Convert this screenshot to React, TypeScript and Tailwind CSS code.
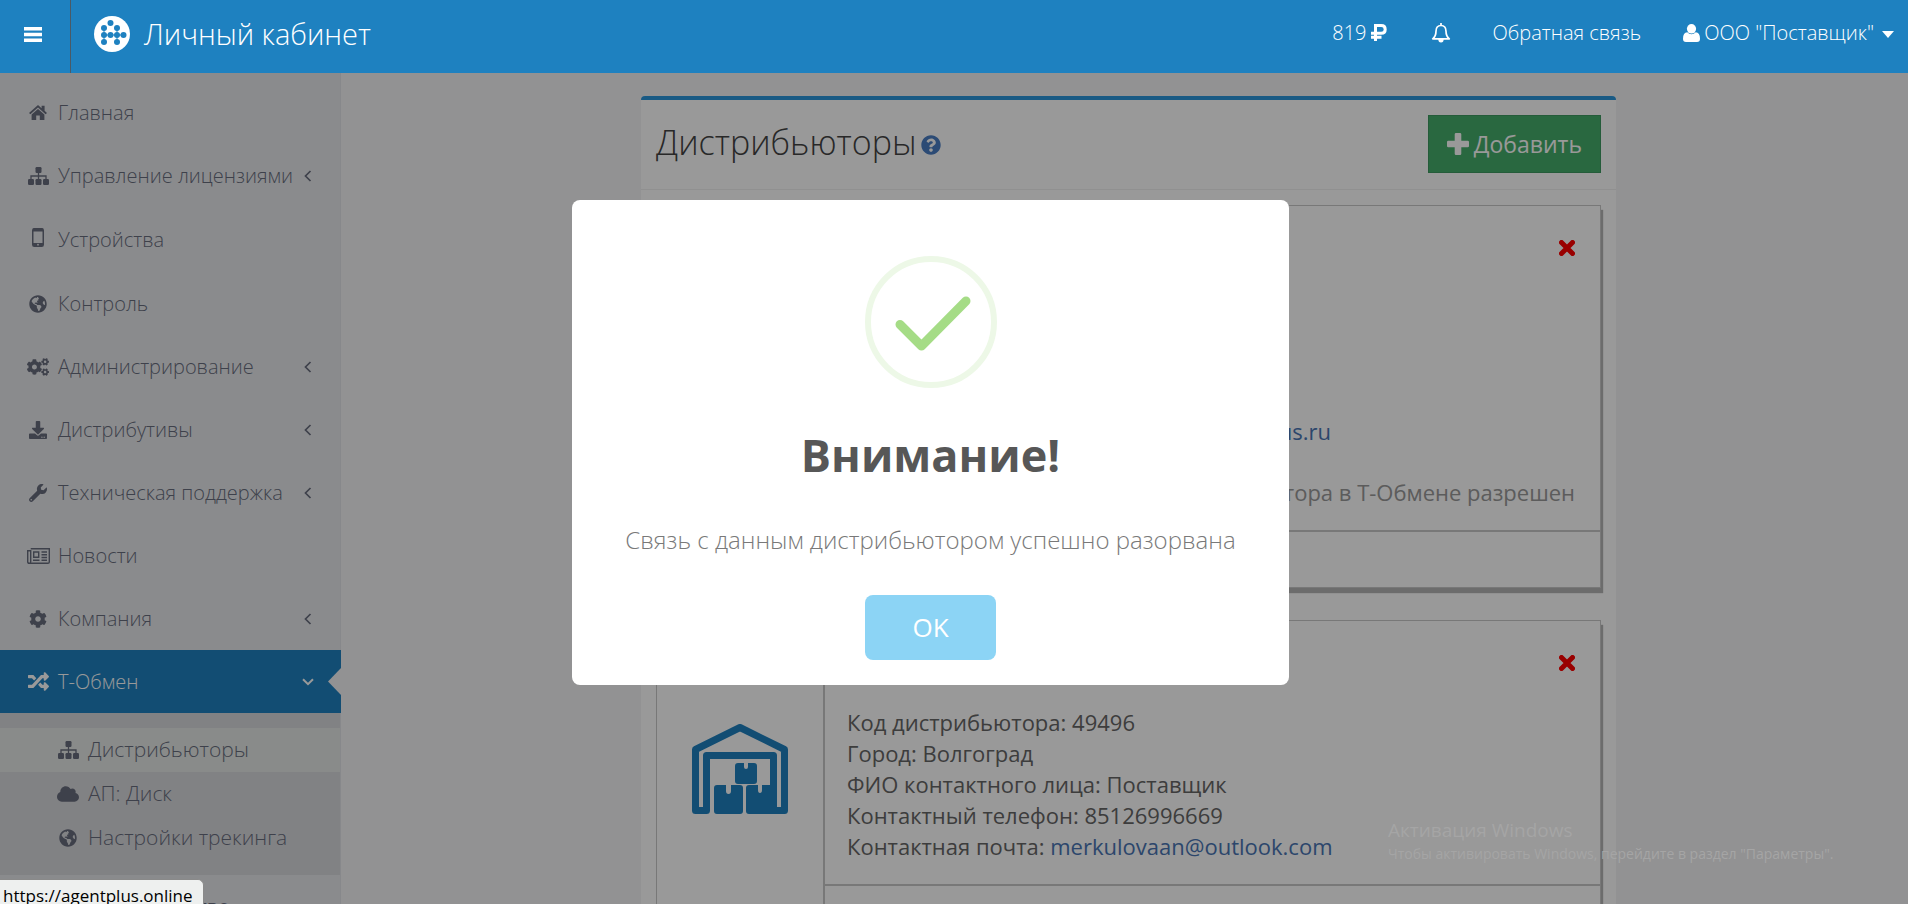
import React from "react";
import {
  FaCloud,
  FaCog,
  FaCogs,
  FaDownload,
  FaGlobeAmericas,
  FaQuestionCircle,
  FaRandom,
  FaWrench,
} from "react-icons/fa";

const HomeIcon = () => (
  <svg viewBox="0 0 18 15" className="w-[18px] h-[15px]" fill="currentColor">
    <path d="M9 0 0 8l1.4 1.2L9 2.4l7.600 6.800L18 8l-2.400-2.200V.8h-3v2.400z" />
    <path d="M9 4 2.600 9.600V15h4.600v-4.600h3.600V15h4.600V9.600z" />
  </svg>
);

const SitemapIcon = () => (
  <svg viewBox="0 0 21 18" className="w-[21px] h-[18px]" fill="currentColor">
    <rect x="7.500" y="0" width="6" height="6" rx="1.200" />
    <rect x="0" y="12" width="6" height="6" rx="1.200" />
    <rect x="7.500" y="12" width="6" height="6" rx="1.200" />
    <rect x="15" y="12" width="6" height="6" rx="1.200" />
    <path d="M3 12V9h15v3M10.500 5v8" fill="none" stroke="currentColor" strokeWidth="1.300" />
  </svg>
);

const MobileIcon = () => (
  <svg viewBox="0 0 12 19" className="w-[12px] h-[19px] -mt-1" fill="none">
    <rect x=".75" y=".75" width="10.500" height="17.500" rx="1.500" stroke="currentColor" strokeWidth="1.500" />
    <path d="M1 2h10M1 16.500h10" stroke="currentColor" strokeWidth="2.800" />
    <circle cx="6" cy="16.700" r=".9" fill="#e7e8ec" />
  </svg>
);

const NewsIcon = () => (
  <svg viewBox="0 0 23 16" className="w-[23px] h-4" fill="none" stroke="currentColor" strokeWidth="1.400">
    <path d="M3.700.7h18.600v13.200q0 1.400-1.400 1.400H2.200q-1.500 0-1.500-1.500V2.700h3v11q0 1.600-1.500 1.600" />
    <path d="M6.700 4h5v5.300h-5zM6 12.300h6.500M14.500 4h5.500M14.500 6.800h5.500M14.500 9.500h5.500M14.500 12.300h5.500" />
  </svg>
);

const BellIcon = () => (
  <svg viewBox="0 0 20 20" className="w-5 h-5" fill="none" stroke="currentColor" strokeWidth="1.700">
    <path d="M10 2.500C6.500 2.500 5 5 5 8.200c0 3.800-1 5.800-3.300 7.600h16.600C16 14 15 12 15 8.200c0-3.200-1.500-5.700-5-5.700z" strokeLinejoin="round" />
    <path d="M10 0v2.500" />
    <path d="M7.300 16a2.700 3.500 0 0 0 5.400 0z" fill="currentColor" stroke="none" />
  </svg>
);

const RubleIcon = () => (
  <svg viewBox="0 0 16 17" className="w-4 h-[17px]" fill="none" stroke="currentColor" strokeWidth="3">
    <path d="M4.500 17V1.500h5.700q4 0 4 3.900t-4 3.900H0M0 13.300h10.500" />
  </svg>
);

const UserIcon = () => (
  <svg viewBox="0 0 17 18" className="w-[17px] h-[18px]" fill="currentColor">
    <ellipse cx="8.500" cy="4.800" rx="4.600" ry="4.800" />
    <path d="M4.300 8.300Q6 10.300 8.500 10.300t4.200-2q4.300.4 4.300 6.500 0 3.200-3 3.200H3q-3 0-3-3.200 0-6.100 4.300-6.500z" />
  </svg>
);

const PlusIcon = () => (
  <svg viewBox="0 0 22 22" className="w-[22px] h-[22px]" fill="currentColor">
    <path d="M9 0h4q1.300 0 1.300 1.300v6.400h6.400Q22 7.700 22 9v4q0 1.300-1.300 1.300h-6.400v6.400Q14.300 22 13 22H9q-1.300 0-1.300-1.300v-6.400H1.300Q0 14.300 0 13V9q0-1.300 1.300-1.300h6.400V1.300Q7.700 0 9 0z" />
  </svg>
);

const TimesIcon = () => (
  <svg viewBox="0 0 16 16" className="w-4 h-4" fill="none" stroke="currentColor" strokeWidth="5">
    <path d="M2.500 2.500l11 11M13.500 2.500l-11 11" strokeLinecap="round" />
  </svg>
);

const AngleIcon = ({ open }: { open?: boolean }) =>
  open ? (
    <svg viewBox="0 0 12 8" className="w-3 h-2" fill="none" stroke="currentColor" strokeWidth="2">
      <path d="M1 1.200 6 6.200l5-5" />
    </svg>
  ) : (
    <svg viewBox="0 0 8 12" className="w-2 h-3 mr-[2px]" fill="none" stroke="currentColor" strokeWidth="1.700">
      <path d="M6.500 1 1.500 6l5 5" />
    </svg>
  );

const Logo = () => (
  <svg viewBox="0 0 36 36" className="w-9 h-9">
    <circle cx="18" cy="18" r="18" fill="#fff" />
    <path d="M10 12v14M23 12v14M10 19h20" stroke="#1e81c0" strokeWidth="1" />
    {[[16.5, 7], [10, 12], [23, 12], [10, 19], [16.5, 19], [23, 19], [29.5, 19], [10, 26], [23, 26]].map(([x, y]) => (
      <circle key={`${x}-${y}`} cx={x} cy={y} r="3" fill="#1e81c0" />
    ))}
  </svg>
);

const WarehouseIcon = () => (
  <svg viewBox="0 0 96 90" className="w-24 h-[90px]" fill="#1e81c0">
    <path d="M48 3.500 3.500 25.500V86.500H14.500V31.500H81.500V86.500H92.500V25.500z" fill="none" stroke="#1e81c0" strokeWidth="7" strokeLinejoin="round" />
    <path d="M78 61h16v26q0 3-3 3H57q-3 0-3-3V64q0-3 3-3h9v5q0 3 2 3t2-3v-5z" />
    <path d="M85 32h4v51h-4z" fill="#fff" />
    <path d="M25 61h9v6q0 3 2.500 3t2.500-3v-6h9q3 0 3 3v23q0 3-3 3H25q-3 0-3-3V64q0-3 3-3z" />
    <path d="M46 39h6v4q0 2 2 2t2-2v-4h6q3 0 3 3v15q0 3-3 3H46q-3 0-3-3V42q0-3 3-3z" />
  </svg>
);

interface MenuItem {
  title: string;
  icon: React.ReactNode;
  arrow?: boolean;
  tall?: boolean;
}

const menu: MenuItem[] = [
  { title: "Главная", icon: <HomeIcon /> },
  { title: "Управление лицензиями", icon: <SitemapIcon />, arrow: true },
  { title: "Устройства", icon: <MobileIcon />, tall: true },
  { title: "Контроль", icon: <FaGlobeAmericas size={18} /> },
  { title: "Администрирование", icon: <FaCogs size={22} />, arrow: true },
  { title: "Дистрибутивы", icon: <FaDownload size={18} />, arrow: true },
  { title: "Техническая поддержка", icon: <FaWrench size={18} />, arrow: true },
  { title: "Новости", icon: <NewsIcon /> },
  { title: "Компания", icon: <FaCog size={18} />, arrow: true },
];

const subMenu = [
  { title: "Дистрибьюторы", icon: <SitemapIcon />, active: true },
  { title: "АП: Диск", icon: <FaCloud size={22} />, active: false },
  { title: "Настройки трекинга", icon: <FaGlobeAmericas size={18} />, active: false },
];

const Header = () => (
  <header className="relative z-20 h-[73px] shrink-0 bg-[#1e81c0] text-white flex items-stretch font-light">
    <button aria-label="Меню" className="w-[71px] border-r border-[#4a5a66] pl-6 pb-1">
      <svg viewBox="0 0 18 15" className="w-[18px] h-[15px]" fill="currentColor">
        <path d="M0 0h18v3.400H0zM0 5.800h18v3.400H0zM0 11.600h18V15H0z" />
      </svg>
    </button>
    <a href="#" className="flex items-center gap-[14px] pl-[23px] pb-[5px] text-[29px]">
      <Logo />
      Личный кабинет
    </a>
    <nav className="ml-auto flex items-center pb-2 pr-[14px] text-xl">
      <a href="#" className="flex items-center gap-1 mr-11">
        819 <RubleIcon />
      </a>
      <a href="#" aria-label="Уведомления" className="mr-[42px]">
        <BellIcon />
      </a>
      <a href="#" className="mr-[42px]">Обратная связь</a>
      <button className="flex items-center gap-1">
        <UserIcon />
        ООО "Поставщик"
        <svg viewBox="0 0 12 7" className="w-3 h-[7px] ml-1 mt-[3px]" fill="currentColor">
          <path d="M0 0h12L6 7z" />
        </svg>
      </button>
    </nav>
  </header>
);

const Sidebar = () => (
  <aside className="w-[341px] shrink-0 bg-[#e7e8ec] border-r border-[#e2e3e8] pt-2 font-light text-xl text-[#686d7d]">
    {menu.map((item) => (
      <a key={item.title} href="#" className={`flex items-center pl-[26px] pr-[26px] ${item.tall ? "h-[65px]" : "h-[63px]"}`}>
        <span className="w-6 mr-2 flex justify-center">{item.icon}</span>
        <span className="grow whitespace-nowrap">{item.title}</span>
        {item.arrow && <AngleIcon />}
      </a>
    ))}
    <a href="#" className="relative h-[63px] -mr-px flex items-center pl-[26px] pr-[27px] bg-[#1e81c0] text-white">
      <span className="w-6 mr-2 flex justify-center">
        <FaRandom size={21} />
      </span>
      <span className="grow">Т-Обмен</span>
      <AngleIcon open />
      <svg viewBox="0 0 13 27" className="absolute right-0 top-[18px] w-[13px] h-[27px]" fill="#f3f3f5">
        <path d="M13 0v27L0 13.500z" />
      </svg>
    </a>
    <div className="bg-[#d8d9dd] py-[15px] text-[21px]">
      {subMenu.map((item) => (
        <a key={item.title} href="#" className={`h-11 flex items-center pl-14 ${item.active ? "bg-[#e5e8e7]" : ""}`}>
          <span className="w-6 mr-2 flex justify-center">{item.icon}</span>
          {item.title}
        </a>
      ))}
    </div>
    <a href="#" className="h-[63px] flex items-center pl-[58px]">Законодательство</a>
  </aside>
);

interface CardProps {
  code: string;
  city: string;
  contact: string;
  phone: string;
  email: string;
  note?: string;
}

const DistributorCard = ({ code, city, contact, phone, email, note }: CardProps) => (
  <section className="flex bg-white border border-[#c8c8c8] shadow-[2px_5px_1px_#b4b4b4]">
    <div className="w-[166px] shrink-0 flex justify-center pt-[103px]">
      <WarehouseIcon />
    </div>
    <div className="grow border-l-2 border-[#c8c8c8]">
      <div className="pl-[22px] pr-[25px] pt-[27px] pb-[22px] border-b-2 border-[#c8c8c8]">
        <div className="flex justify-end items-start h-[59px]">
          <button aria-label="Удалить" className="pt-[7px] text-[#f00]">
            <TimesIcon />
          </button>
        </div>
        <p>Код дистрибьютора: {code}</p>
        <p>Город: {city}</p>
        <p>ФИО контактного лица: {contact}</p>
        <p>Контактный телефон: {phone}</p>
        <p>
          Контактная почта: <a href="#" className="text-[#4a76b4]">{email}</a>
        </p>
        {note && <p className="mt-[30px] text-right text-[#999]">{note}</p>}
      </div>
      <div className="h-[55px]" />
    </div>
  </section>
);

const SuccessDialog = () => (
  <div role="dialog" aria-modal="true" aria-labelledby="dialog-title" className="absolute z-30 top-[200px] left-1/2 -ml-[382px] w-[717px] rounded-lg bg-white flex flex-col items-center pt-14 pb-[25px]">
    <svg viewBox="0 0 132 132" className="w-[132px] h-[132px] shrink-0" fill="none">
      <circle cx="66" cy="66" r="63" stroke="#edf8e7" strokeWidth="6" />
      <path d="M35 68.500 56.500 90 101 45" stroke="#a5dc86" strokeWidth="9" strokeLinecap="round" strokeLinejoin="round" />
    </svg>
    <h2 id="dialog-title" className="mt-[37px] text-[45px] leading-[60px] font-bold text-[#575757]">Внимание!</h2>
    <p className="mt-[37px] text-2xl leading-9 font-light text-[#797979]">Связь с данным дистрибьютором успешно разорвана</p>
    <button className="mt-[37px] w-[131px] h-[65px] rounded-lg bg-[#8cd4f5] text-white text-[26px]">OK</button>
  </div>
);

export default function App() {
  return (
    <div className="relative h-screen overflow-hidden flex flex-col bg-[#f3f3f5] font-['Open_Sans',sans-serif]">
      <Header />
      <div className="flex grow min-h-0">
        <Sidebar />
        <main className="grow pt-[23px] pr-[292px] pl-[300px]">
          <div className="bg-white rounded-t border-t-4 border-[#2a97dd]">
            <div className="flex items-start justify-between px-[15px] pt-[15px] h-[90px] border-b border-[#f0f0f0]">
              <h1 className="flex items-center gap-1 pt-[3px] text-[34px] leading-[48px] font-light text-[#444]">
                Дистрибьюторы
                <FaQuestionCircle size={20} className="mt-[5px] text-[#4a7ec4]" />
              </h1>
              <button className="h-[58px] px-[18px] flex items-center gap-[5px] border border-[#3f9a62] bg-[#45ad6b] text-white text-[23px]">
                <PlusIcon />
                Добавить
              </button>
            </div>
            <div className="p-[15px] flex flex-col gap-8 text-[22px] leading-[31px] text-[#666]">
              <DistributorCard
                code="49495"
                city="Волгоград"
                contact="Агент Плюс"
                phone="88442260000"
                email="distributors1@agentplus.ru"
                note="Заказ у дистрибьютора в Т-Обмене разрешен"
              />
              <DistributorCard code="49496" city="Волгоград" contact="Поставщик" phone="85126996669" email="merkulovaan@outlook.com" />
            </div>
          </div>
        </main>
      </div>

      <div className="absolute inset-0 z-10 bg-black/40" />
      <SuccessDialog />

      <div className="absolute z-40 right-[60px] bottom-10 w-[460px] whitespace-nowrap text-[#a5a5a5]">
        <p className="text-[19px] leading-7">Активация Windows</p>
        <p className="text-sm">Чтобы активировать Windows, перейдите в раздел "Параметры".</p>
      </div>
      <div className="absolute z-40 left-0 bottom-0 h-[25px] pl-[3px] pr-[10px] pt-[3px] rounded-tr-md border-t border-r border-[#8a8a8a] bg-[#eef0ef] text-[17px] leading-[26px] text-black overflow-hidden">
        https://agentplus.online
      </div>
    </div>
  );
}
